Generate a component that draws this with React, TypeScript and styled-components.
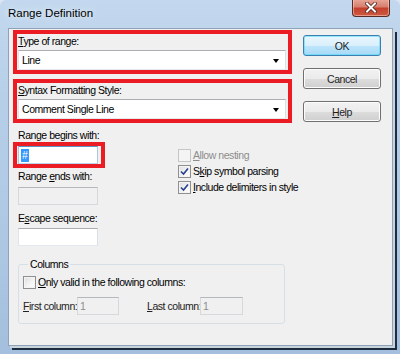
import React from 'react';
import styled, { createGlobalStyle } from 'styled-components';

const GlobalStyle = createGlobalStyle`
  html, body { margin: 0; padding: 0; background: #dbe6f2; }
  body { width: 400px; height: 354px; overflow: hidden; }
`;

const uiFont = `"Liberation Sans", Arial, sans-serif`;

const Window = styled.div`
  width: 400px;
  height: 354px;
  box-sizing: border-box;
  display: flex;
  flex-direction: column;
  background: linear-gradient(to bottom, #c3d8ee 0%, #b6cee8 30%, #adc7e3 70%, #a3bfdd 100%);
  border-radius: 6px 6px 0 0;
  font-family: ${uiFont};
  font-size: 10.5px;
  letter-spacing: -0.45px;
  color: #000;
  overflow: hidden;
`;

const TitleBar = styled.div`
  height: 28px;
  flex: none;
  display: flex;
  align-items: flex-start;
  justify-content: space-between;
  padding: 0 10px 0 8px;
`;

const Title = styled.div`
  font-size: 11.5px;
  letter-spacing: 0;
  line-height: 14px;
  margin-top: 6px;
  text-shadow: 0 0 6px rgba(255, 255, 255, 0.9);
`;

const CloseBtn = styled.div`
  width: 38px;
  height: 18px;
  margin-top: -1px;
  box-sizing: border-box;
  border: 1px solid #5a2a26;
  border-top: none;
  border-radius: 0 0 4px 4px;
  background: linear-gradient(to bottom, #e9a99a 0%, #d7806f 45%, #c4402d 55%, #cf5a40 100%);
  box-shadow: inset 0 0 0 1px rgba(255, 220, 210, 0.5);
  display: flex;
  align-items: center;
  justify-content: center;
`;

const Client = styled.div`
  margin-left: 8px;
  width: 385px;
  height: 318px;
  box-sizing: border-box;
  border: 1px solid #8fa3b8;
  background: #f0f0f0;
  box-shadow: 2px 2px 0 #c9d3dd, 4px 4px 0 #1d2c3f;
  display: flex;
  align-items: flex-start;
  padding-left: 4px;
`;

const LeftCol = styled.div`
  width: 279px;
  display: flex;
  flex-direction: column;
`;

const RightCol = styled.div`
  margin-left: 11px;
  margin-top: 6px;
  display: flex;
  flex-direction: column;
  gap: 12px;
`;

const RedBox = styled.div`
  box-sizing: border-box;
  border: 4px solid #ec1c24;
  display: flex;
  flex-direction: column;
`;

const ComboBox = styled(RedBox)<{ $top: number }>`
  height: 44px;
  margin-top: ${(p) => p.$top}px;
  padding: 0 2px 0 1px;
`;

const Label = styled.div<{ $top?: number; $left?: number; $dim?: boolean }>`
  line-height: 13px;
  height: 13px;
  margin-top: ${(p) => p.$top ?? 0}px;
  margin-left: ${(p) => p.$left ?? 0}px;
  color: ${(p) => (p.$dim ? '#8d8d8d' : '#000')};
  white-space: nowrap;
`;

const Key = styled.span`
  text-decoration: underline;
  text-underline-offset: 1px;
`;

const Combo = styled.div`
  height: 20px;
  margin-top: 2px;
  box-sizing: border-box;
  border: 1px solid;
  border-color: #abadb3 #dbdfe6 #e3e9ef #e2e3ea;
  background: #fff;
  display: flex;
  align-items: center;
  justify-content: space-between;
  padding: 0 6px 0 3px;
`;

const Arrow = styled.span`
  width: 0;
  height: 0;
  border-left: 3.5px solid transparent;
  border-right: 3.5px solid transparent;
  border-top: 4px solid #000;
  margin-top: 1px;
`;

const Middle = styled.div`
  display: flex;
  align-items: flex-start;
`;

const FieldCol = styled.div`
  width: 92px;
  display: flex;
  flex-direction: column;
`;

const FocusBox = styled(RedBox)`
  width: 92px;
  height: 26px;
  padding: 0 3px 0 1px;
`;

const TextBox = styled.div<{ $top?: number; $left?: number; $w?: number; $disabled?: boolean; $focus?: boolean }>`
  width: ${(p) => p.$w ?? 80}px;
  height: 18px;
  flex: none;
  margin-top: ${(p) => p.$top ?? 0}px;
  margin-left: ${(p) => p.$left ?? 0}px;
  box-sizing: border-box;
  border: 1px solid;
  border-color: ${(p) =>
    p.$focus
      ? '#5c93c5 #a9c8e4 #b9d4ec #a9c8e4'
      : p.$disabled
      ? '#b4b8bc #d6d9dc #d6d9dc #d6d9dc'
      : '#abadb3 #dbdfe6 #e3e9ef #e2e3ea'};
  background: ${(p) => (p.$disabled ? '#f0f0f0' : '#fff')};
  color: #8d8d8d;
  display: flex;
  align-items: center;
  padding-left: 2px;
  line-height: 13px;
`;

const Selected = styled.span`
  background: #3399ff;
  color: #fff;
  padding: 0 1px;
  line-height: 13px;
  letter-spacing: 0;
`;

const CheckCol = styled.div`
  margin-left: 73px;
  margin-top: 24px;
  display: flex;
  flex-direction: column;
`;

const CheckRow = styled.div<{ $dim?: boolean }>`
  height: 16px;
  display: flex;
  align-items: center;
  gap: 2px;
  color: ${(p) => (p.$dim ? '#8d8d8d' : '#000')};
  white-space: nowrap;
`;

const Box = styled.span<{ $dim?: boolean }>`
  width: 13px;
  height: 13px;
  box-sizing: border-box;
  flex: none;
  border: 1px solid ${(p) => (p.$dim ? '#c6c6c6' : '#8f8f8f')};
  background: ${(p) =>
    p.$dim ? '#f4f4f4' : 'linear-gradient(135deg, #dcdcdc 0%, #f5f5f5 60%, #ffffff 100%)'};
  box-shadow: inset 0 0 0 1px #f4f4f4;
  display: flex;
  align-items: center;
  justify-content: center;
`;

const Group = styled.fieldset`
  margin: 12px 0 0 5px;
  width: 267px;
  box-sizing: border-box;
  padding: 3px 0 8px 4px;
  border: 1px solid #d5dfe5;
  border-radius: 3px;
  min-width: 0;
`;

const Legend = styled.legend`
  padding: 0 2px;
  margin-left: 5px;
  line-height: 13px;
`;

const ColRow = styled.div`
  display: flex;
  align-items: center;
  margin-top: 7px;
`;

const ColLabel = styled.div<{ $w: number; $left?: number }>`
  width: ${(p) => p.$w}px;
  margin-left: ${(p) => p.$left ?? 0}px;
  white-space: nowrap;
  color: #222;
`;

const Button = styled.div<{ $default?: boolean }>`
  width: 78px;
  height: 21px;
  box-sizing: border-box;
  border: 1px solid ${(p) => (p.$default ? '#3c7fb1' : '#707070')};
  border-radius: 3px;
  background: ${(p) =>
    p.$default
      ? 'linear-gradient(to bottom, #eaf6fd 0%, #d9f0fc 50%, #bee6fd 51%, #a7d9f5 100%)'
      : 'linear-gradient(to bottom, #f2f2f2 0%, #ebebeb 50%, #dddddd 51%, #cfcfcf 100%)'};
  box-shadow: inset 0 0 0 1px ${(p) => (p.$default ? '#48d8fb88' : '#fcfcfc')};
  display: flex;
  align-items: center;
  justify-content: center;
  color: #1e1e1e;
`;

function Check({ checked, dim }: { checked?: boolean; dim?: boolean }) {
  return (
    <Box $dim={dim}>
      {checked && (
        <svg width="9" height="9" viewBox="0 0 9 9">
          <path d="M1 4.5 L3.5 7 L8 1.5" fill="none" stroke="#2a3f8f" strokeWidth="1.6" />
        </svg>
      )}
    </Box>
  );
}

export default function App() {
  return (
    <>
      <GlobalStyle />
      <Window>
        <TitleBar>
          <Title>Range Definition</Title>
          <CloseBtn>
            <svg width="12" height="11" viewBox="0 0 12 11">
              <path d="M2 1.5 L10 9.5 M10 1.5 L2 9.5" stroke="#4b1f1a" strokeWidth="3.6" strokeLinecap="square" />
              <path d="M2 1.5 L10 9.5 M10 1.5 L2 9.5" stroke="#ffffff" strokeWidth="2" strokeLinecap="square" />
            </svg>
          </CloseBtn>
        </TitleBar>
        <Client>
          <LeftCol>
            <ComboBox $top={1}>
              <Label $top={1}>
                <Key>T</Key>ype of range:
              </Label>
              <Combo>
                <span>Line</span>
                <Arrow />
              </Combo>
            </ComboBox>
            <ComboBox $top={5}>
              <Label $top={1}>
                <Key>S</Key>yntax Formatting Style:
              </Label>
              <Combo>
                <span>Comment Single Line</span>
                <Arrow />
              </Combo>
            </ComboBox>
            <Middle>
              <FieldCol>
                <Label $top={6} $left={5}>Range begins with:</Label>
                <FocusBox>
                  <TextBox $focus>
                    <Selected>#</Selected>
                  </TextBox>
                </FocusBox>
                <Label $top={2} $left={5}>
                  Range <Key>e</Key>nds with:
                </Label>
                <TextBox $top={4} $left={5} $disabled />
                <Label $top={7} $left={5}>
                  E<Key>s</Key>cape sequence:
                </Label>
                <TextBox $top={3} $left={5} />
              </FieldCol>
              <CheckCol>
                <CheckRow $dim>
                  <Check dim />
                  <span>
                    <Key>A</Key>llow nesting
                  </span>
                </CheckRow>
                <CheckRow>
                  <Check checked />
                  <span>
                    S<Key>k</Key>ip symbol parsing
                  </span>
                </CheckRow>
                <CheckRow>
                  <Check checked />
                  <span>
                    <Key>I</Key>nclude delimiters in style
                  </span>
                </CheckRow>
              </CheckCol>
            </Middle>
            <Group>
              <Legend>Columns</Legend>
              <CheckRow>
                <Check />
                <span>
                  <Key>O</Key>nly valid in the following columns:
                </span>
              </CheckRow>
              <ColRow>
                <ColLabel $w={54}>
                  <Key>F</Key>irst column:
                </ColLabel>
                <TextBox $w={42} $disabled>1</TextBox>
                <ColLabel $w={53} $left={28}>
                  <Key>L</Key>ast column:
                </ColLabel>
                <TextBox $w={43} $disabled>1</TextBox>
              </ColRow>
            </Group>
          </LeftCol>
          <RightCol>
            <Button $default>OK</Button>
            <Button>Cancel</Button>
            <Button>
              <span>
                <Key>H</Key>elp
              </span>
            </Button>
          </RightCol>
        </Client>
      </Window>
    </>
  );
}
